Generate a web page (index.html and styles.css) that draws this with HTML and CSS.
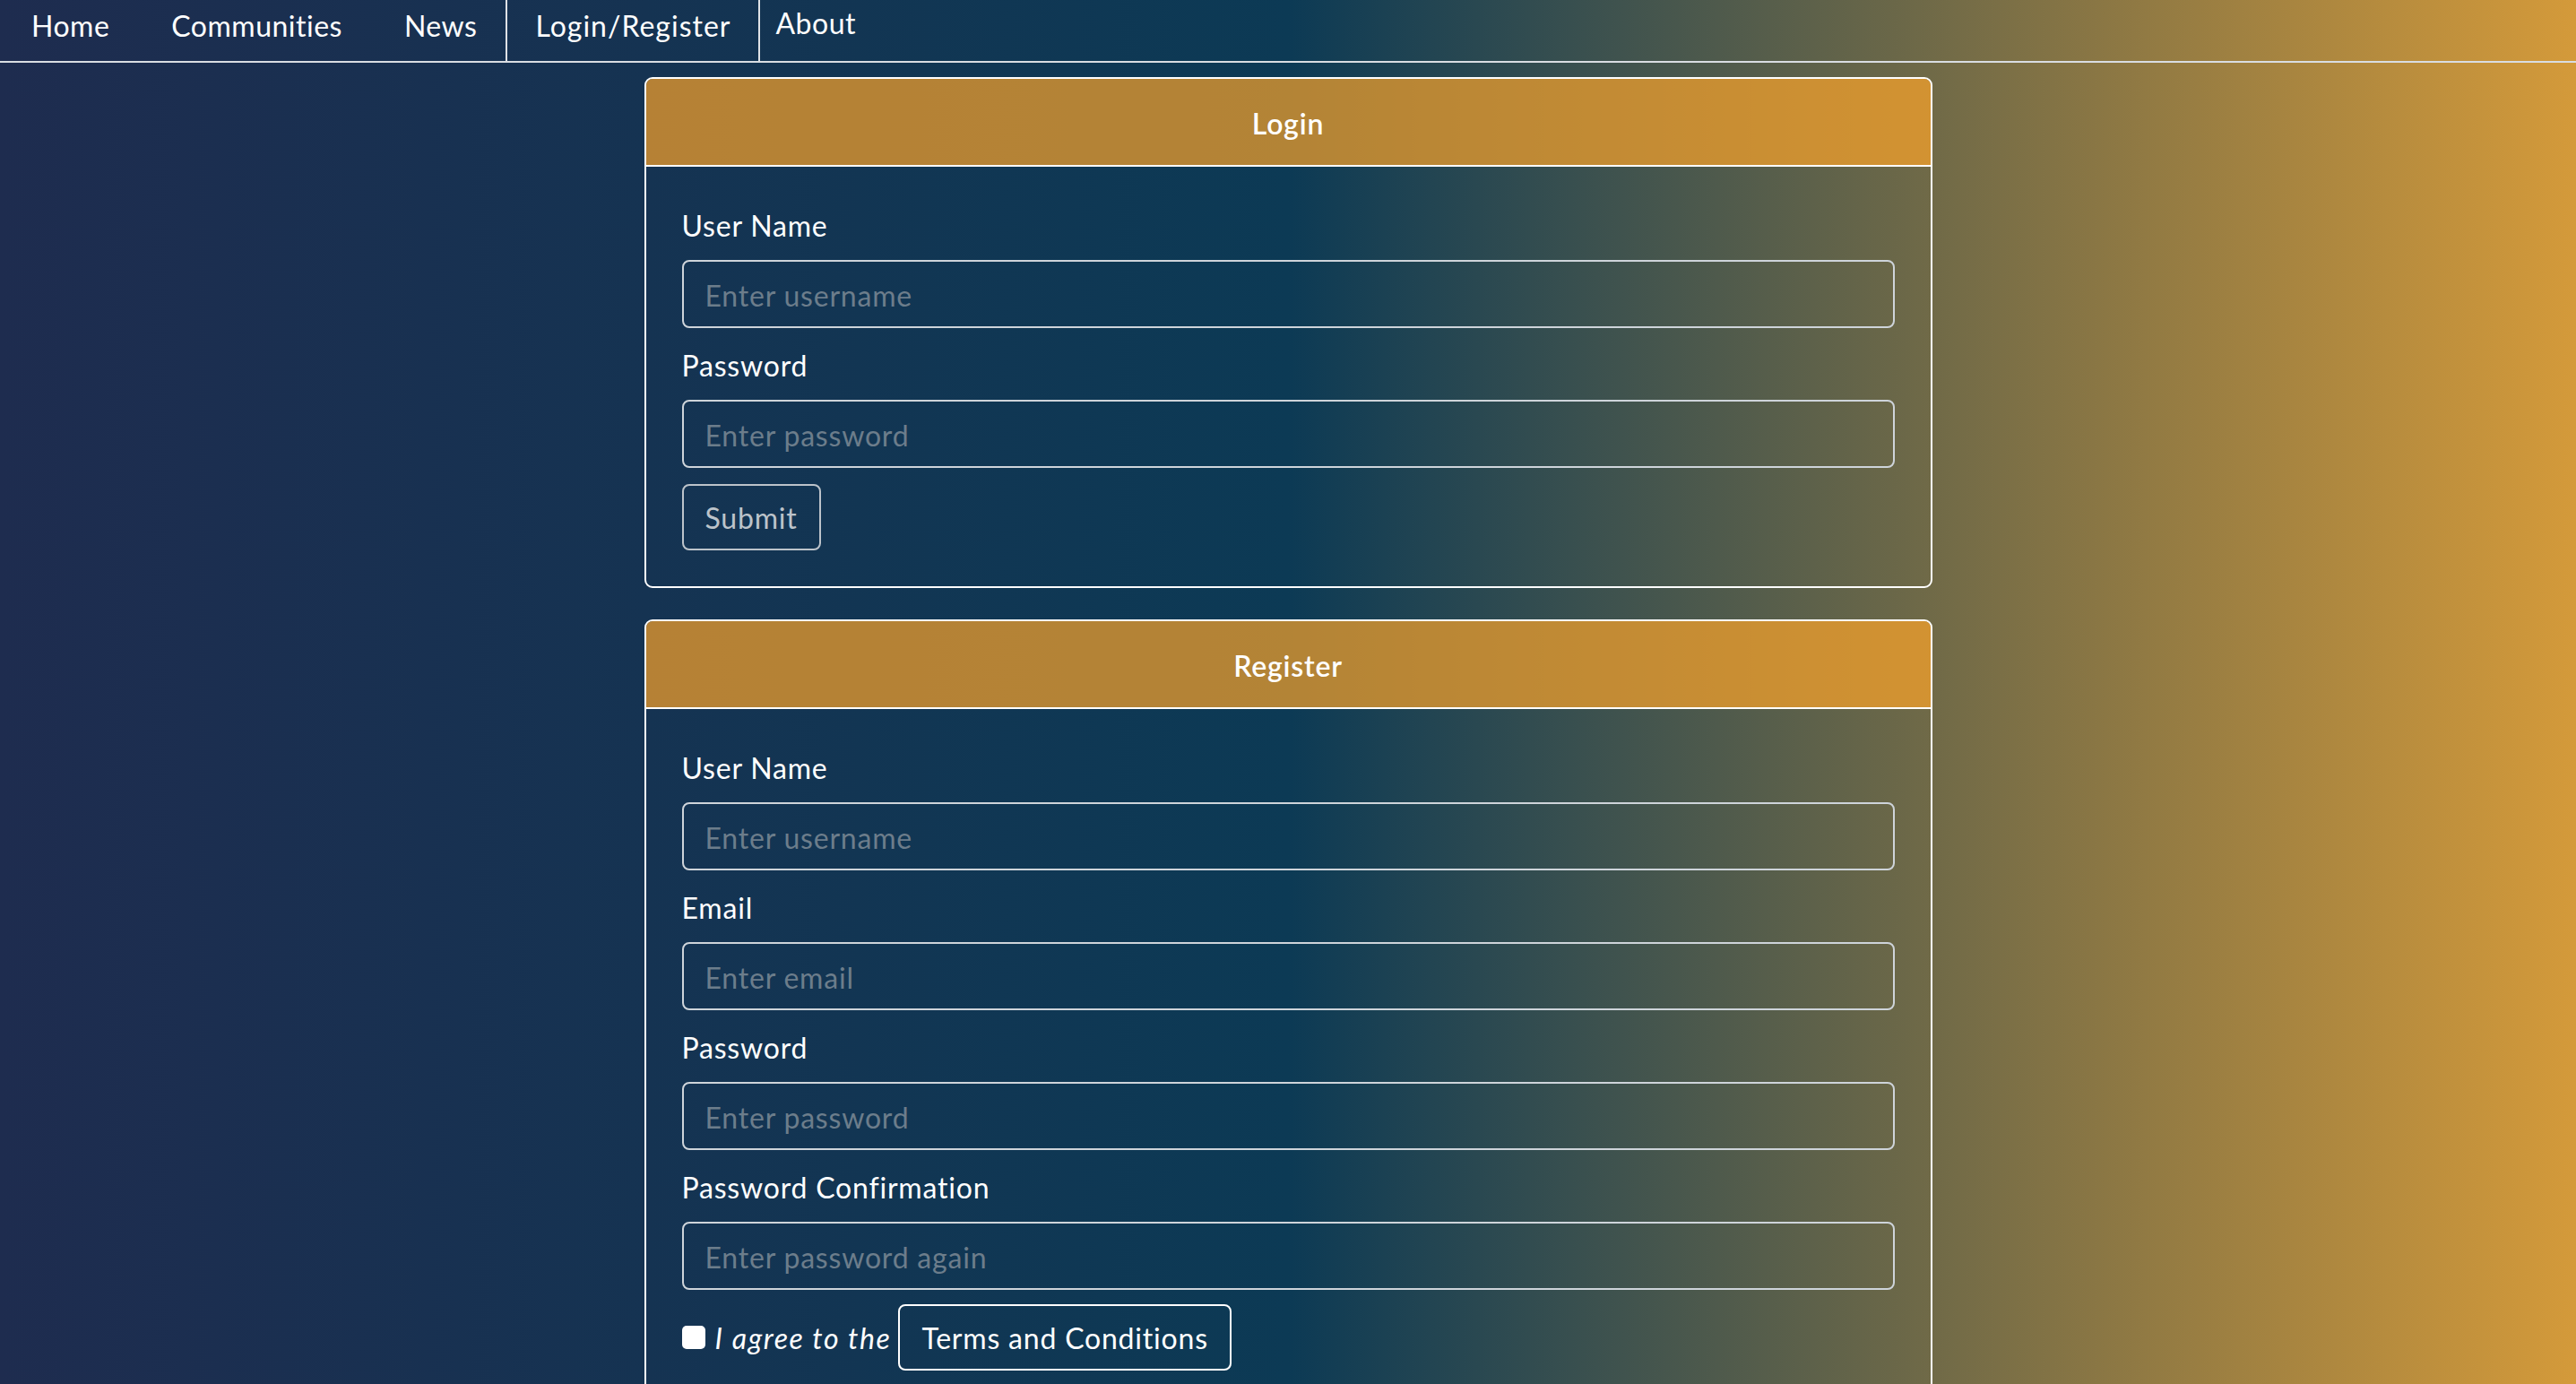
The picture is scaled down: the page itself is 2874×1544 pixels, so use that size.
FILE: index.html
```html
<!DOCTYPE html>
<html lang="en">
<head>
<meta charset="utf-8">
<title>Login / Register</title>
<link rel="stylesheet" href="styles.css">
</head>
<body>
<nav class="navbar">
  <a class="nav-link" href="#">Home</a>
  <a class="nav-link" href="#">Communities</a>
  <a class="nav-link" href="#">News</a>
  <a class="nav-link nav-link--boxed" href="#">Login/Register</a>
  <a class="nav-link nav-link--about" href="#">About</a>
</nav>
<main class="container">
  <section class="card">
    <div class="card-header">Login</div>
    <form class="card-body">
      <div class="form-group">
        <label class="form-label">User Name</label>
        <input class="form-control" type="text" placeholder="Enter username">
      </div>
      <div class="form-group">
        <label class="form-label">Password</label>
        <input class="form-control" type="password" placeholder="Enter password">
      </div>
      <button class="btn btn-submit" type="button">Submit</button>
    </form>
  </section>
  <section class="card card--spaced">
    <div class="card-header">Register</div>
    <form class="card-body">
      <div class="form-group">
        <label class="form-label">User Name</label>
        <input class="form-control" type="text" placeholder="Enter username">
      </div>
      <div class="form-group">
        <label class="form-label">Email</label>
        <input class="form-control" type="email" placeholder="Enter email">
      </div>
      <div class="form-group">
        <label class="form-label">Password</label>
        <input class="form-control" type="password" placeholder="Enter password">
      </div>
      <div class="form-group">
        <label class="form-label">Password Confirmation</label>
        <input class="form-control" type="password" placeholder="Enter password again">
      </div>
      <div class="form-check">
        <input class="check-box" type="checkbox">
        <span class="check-label">I agree to the</span>
        <button class="btn btn-terms" type="button">Terms and Conditions</button>
      </div>
    </form>
  </section>
</main>
</body>
</html>
```
FILE: styles.css
```css
html, body {
  overflow: hidden;
}
body {
  margin: 0;
  min-height: 100vh;
  font-family: Lato, "Open Sans", "Liberation Sans", sans-serif;
  font-size: 32px;
  letter-spacing: 0.8px;
  color: #ffffff;
  background: linear-gradient(to right, #1e2c4f 0%, #0c3a55 50%, #d49a3a 100%);
}

.navbar {
  display: flex;
  align-items: stretch;
  height: 68px;
  border-bottom: 2px solid #d9dde2;
}
.nav-link {
  display: block;
  padding: 5px 34px 15px 35px;
  line-height: 48px;
  letter-spacing: 0.5px;
  color: #ffffff;
  text-decoration: none;
}
.nav-link--boxed {
  padding-left: 31px;
  padding-right: 31px;
  letter-spacing: 1px;
  border-left: 2px solid #dfe2e6;
  border-right: 2px solid #dfe2e6;
  margin-left: -2px;
}
.nav-link--about {
  padding-left: 17px;
  padding-top: 2px;
}

.container {
  width: 50%;
  margin: 16px auto 0 auto;
}
.card {
  border: 2px solid #ffffff;
  border-radius: 9px;
  overflow: hidden;
}
.card--spaced {
  margin-top: 35px;
}
.card-header {
  padding: 26px 40px 22px 40px;
  line-height: 48px;
  text-align: center;
  font-weight: 600;
  background: rgba(255, 165, 40, 0.69);
  border-bottom: 2px solid #ffffff;
}
.card-body {
  padding: 40px;
}
.form-group {
  margin-bottom: 16px;
}
.form-label {
  display: block;
  line-height: 48px;
  padding-top: 2px;
  margin-bottom: 14px;
}
.form-control {
  display: block;
  box-sizing: border-box;
  width: 100%;
  height: 76px;
  padding: 13px 24px 11px 24px;
  font-family: inherit;
  font-size: 32px;
  letter-spacing: 0.8px;
  color: #ffffff;
  background: transparent;
  border: 2px solid #ced4da;
  border-radius: 8px;
  outline: none;
}
.form-control::placeholder {
  color: #6c7d8b;
}
.btn {
  display: inline-block;
  box-sizing: border-box;
  height: 74px;
  padding: 12px 24px 10px 24px;
  font-family: inherit;
  font-size: 32px;
  letter-spacing: 0.8px;
  line-height: 48px;
  background: transparent;
  border-radius: 8px;
  cursor: pointer;
}
.btn-submit {
  margin-top: 2px;
  color: #bcc3ca;
  border: 2px solid #bcc3ca;
}
.form-check {
  display: flex;
  align-items: center;
  margin-top: 2px;
  margin-bottom: 24px;
}
.check-box {
  appearance: none;
  -webkit-appearance: none;
  width: 26px;
  height: 26px;
  margin: 0 11px 0 0;
  background: #ffffff;
  border-radius: 5px;
}
.check-label {
  font-style: italic;
  letter-spacing: 1.6px;
  margin-right: 8px;
}
.btn-terms {
  color: #ffffff;
  border: 2px solid #ffffff;
}
```
